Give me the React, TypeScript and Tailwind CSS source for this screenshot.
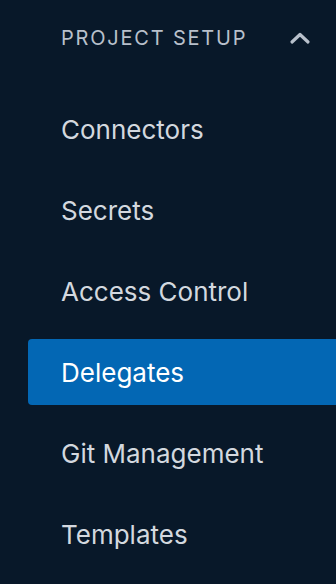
import React from 'react';

const items = ['Connectors', 'Secrets', 'Access Control', 'Delegates', 'Git Management', 'Templates'];

const App: React.FC = () => {
    const active = 'Delegates';

    return (
        <div className="w-[336px] h-[584px] bg-[#081829] overflow-hidden" style={{ fontFamily: 'Inter, "Noto Sans", sans-serif' }}>
            {/* Section header */}
            <div className="h-[76px] flex items-center justify-between pl-[61px] pr-[25px]">
                <span className="text-[20px] tracking-[0.09em] text-[#b8c0cb] font-normal">PROJECT SETUP</span>
                <svg width="22" height="14" viewBox="0 0 22 14" fill="none">
                    <path d="M3 11 L11 3.5 L19 11" stroke="#b8c0cb" strokeWidth="3.2" strokeLinecap="round" strokeLinejoin="round" />
                </svg>
            </div>

            {/* Nav items */}
            <nav className="mt-[20px] ml-[28px] flex flex-col gap-[15px]">
                {items.map((item) => (
                    <a
                        key={item}
                        href="#"
                        className={`h-[66px] flex items-center pl-[33px] rounded-l-[4px] text-[26px] ${item === active
                                ? 'bg-[#0367b4] text-white'
                                : 'text-[#d3d8df]'
                            }`}
                    >
                        {item}
                    </a>
                ))}
            </nav>
        </div>
    );
};

export default App;
